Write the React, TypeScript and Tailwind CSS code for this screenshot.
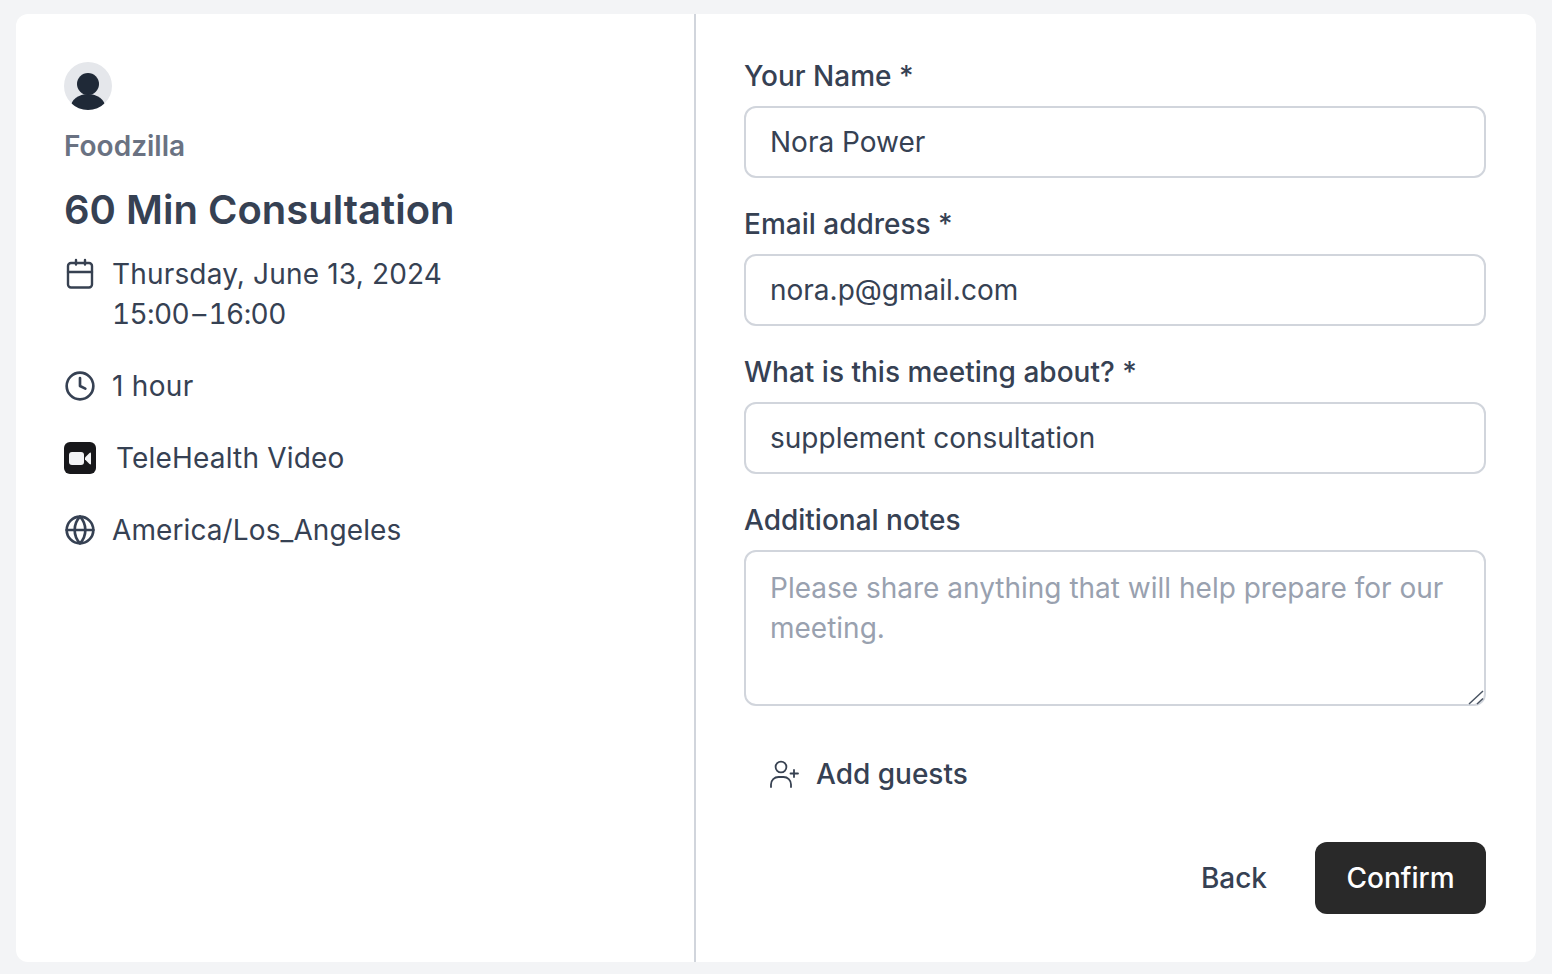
import { Clock, Globe } from 'lucide-react'

const FONT = "font-['Inter',sans-serif]"

function CalendarIcon() {
  return (
    <svg viewBox="0 0 32 32" fill="none" stroke="#374151" strokeWidth="2.4" strokeLinecap="round" className="w-8 h-8 mt-1 shrink-0">
      <rect x="4" y="5" width="24" height="24.5" rx="3" />
      <path d="M4 14 H28 M12 2 V6.5 M21 2 V6.5" />
    </svg>
  )
}

function VideoIcon() {
  return (
    <svg viewBox="0 0 32 32" className="w-8 h-8 shrink-0">
      <rect width="32" height="32" rx="6" fill="#18181b" />
      <rect x="5" y="10" width="15" height="13" rx="3" fill="#f3f4f6" />
      <path d="M21 15.5 L25.5 11 Q27 10 27 11.5 V21.5 Q27 23 25.5 22 L21 17.5 Z" fill="#f3f4f6" />
    </svg>
  )
}

function AddGuestIcon() {
  return (
    <svg viewBox="0 0 30 28" fill="none" stroke="#374151" strokeWidth="1.8" strokeLinecap="round" className="w-[30px] h-[28px] shrink-0">
      <circle cx="11" cy="7" r="5.4" />
      <path d="M1 27 V24.5 A7.5 7.5 0 0 1 8.5 17 H13.5 A7.5 7.5 0 0 1 21 24.5 V27" />
      <path d="M24 10 V17 M20.5 13.5 H28" />
    </svg>
  )
}

function Field({ label, value }: { label: string; value: string }) {
  return (
    <div className="mb-[26px]">
      <label className="block text-[28px] leading-[40px] font-medium text-gray-700 mb-[10px]">{label}</label>
      <input
        readOnly
        defaultValue={value}
        className="block w-full h-[72px] px-6 bg-white border-2 border-gray-300 rounded-xl text-[28px] text-gray-700 outline-none"
      />
    </div>
  )
}

export default function App() {
  return (
    <div className={`${FONT} h-screen bg-gray-100 pl-4 pr-4 pt-[14px] pb-3`}>
      <div className="h-full bg-white rounded-xl flex overflow-hidden">
        {/* Event summary */}
        <div className="w-[680px] shrink-0 border-r-2 border-gray-300 pl-12 pt-12">
          <div className="w-12 h-12 rounded-full bg-gray-200 overflow-hidden">
            <svg viewBox="0 0 48 48" className="w-12 h-12" fill="#1f2937">
              <circle cx="24" cy="22" r="11" />
              <ellipse cx="24" cy="45" rx="17" ry="13" />
            </svg>
          </div>
          <div className="mt-4 text-[28px] leading-[40px] font-semibold text-gray-500">Foodzilla</div>
          <h1 className="mt-[14px] text-[40px] leading-[60px] font-semibold text-gray-700">60 Min Consultation</h1>
          <ul className="mt-[14px] text-[28px] leading-[40px] text-gray-700 flex flex-col gap-8">
            <li className="flex gap-4">
              <CalendarIcon />
              <div>
                <span className="tracking-[0.17px]">Thursday, June 13, 2024</span>
                <br />
                <span className="flex items-center gap-[3px] tabular-nums tracking-[-0.6px]">
                  <span>15:00</span>
                  <span>–</span>
                  <span>16:00</span>
                </span>
              </div>
            </li>
            <li className="flex items-center gap-4">
              <Clock className="w-8 h-8 shrink-0" strokeWidth={2} />
              <span className="tracking-[0.3px]">1 hour</span>
            </li>
            <li className="flex items-center gap-5">
              <VideoIcon />
              <span className="tracking-[0.18px]">TeleHealth Video</span>
            </li>
            <li className="flex items-center gap-4">
              <Globe className="w-8 h-8 shrink-0" strokeWidth={2} />
              <span className="tracking-[0.1px]">America/Los_Angeles</span>
            </li>
          </ul>
        </div>

        {/* Booking form */}
        <div className="flex-1 pl-12 pr-[50px] pt-[42px]">
          <Field label="Your Name *" value="Nora Power" />
          <Field label="Email address *" value="nora.p@gmail.com" />
          <Field label="What is this meeting about? *" value="supplement consultation" />
          <div>
            <label className="block text-[28px] leading-[40px] font-medium text-gray-700 mb-[10px]">Additional notes</label>
            <div className="relative">
              <textarea
                readOnly
                placeholder="Please share anything that will help prepare for our meeting."
                className="block w-full h-[156px] px-6 py-4 bg-white border-2 border-gray-300 rounded-xl text-[28px] leading-[40px] text-gray-700 placeholder:text-gray-400 outline-none resize-none"
              />
              <svg viewBox="0 0 16 16" fill="none" stroke="#4b5563" strokeWidth="1.5" className="absolute right-[2px] bottom-[1px] w-4 h-4">
                <path d="M1 15 L15 2 M9 15 L15 9.5" />
              </svg>
            </div>
          </div>
          <div className="mt-[44px] pl-[26px] flex items-center gap-4 h-12 text-[28px] font-medium text-gray-700">
            <AddGuestIcon />
            Add guests
          </div>
          <div className="mt-[44px] flex justify-end items-center gap-12">
            <button className="text-[28px] font-medium text-gray-700">Back</button>
            <button className="h-[72px] w-[171px] bg-[#292929] rounded-xl text-[28px] font-medium text-white">Confirm</button>
          </div>
        </div>
      </div>
    </div>
  )
}
